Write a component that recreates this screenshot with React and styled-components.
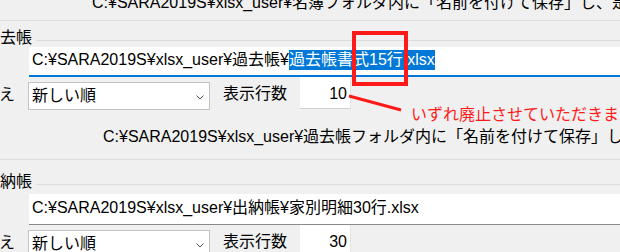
import React from 'react';
import styled, { createGlobalStyle } from 'styled-components';

const Global = createGlobalStyle`
  html, body { margin: 0; padding: 0; background: #f0f0f0; overflow: hidden; }
  body {
    font-family: "Liberation Sans", "Noto Sans CJK JP", sans-serif;
    font-size: 16px;
    color: #000;
  }
`;

const Viewport = styled.div`
  position: relative;
  width: 620px;
  height: 252px;
  overflow: hidden;
  background: #f0f0f0;
`;

const Canvas = styled.div`
  margin-left: -60px;
  margin-top: -8px;
  width: 800px;
`;

const TopNote = styled.div`
  border-bottom: 1px solid #dcdcdc;
  padding: 0 0 6px 152px;
  line-height: 22px;
  white-space: nowrap;
`;

const Group = styled.section`
  margin-top: ${p => p.$top}px;
  border-bottom: 1px solid #dcdcdc;
  padding-bottom: 11px;
`;

const Header = styled.div`
  display: flex;
  height: 18px;
`;

const Legend = styled.span`
  margin-left: 44px;
  padding-right: 4px;
  line-height: 18px;
  white-space: nowrap;
`;

const Rule = styled.span`
  flex: 1;
  height: 1px;
  margin-top: 11px;
  background: #dcdcdc;
`;

const PathBox = styled.div`
  margin: ${p => p.$gap}px 0 0 89px;
  width: 620px;
  height: ${p => (p.$focused ? 30 : 31)}px;
  box-sizing: border-box;
  background: #fff;
  border-bottom: ${p => (p.$focused ? '2px solid #0078d7' : '1px solid #8a8a8a')};
  padding: ${p => (p.$focused ? 3 : 4)}px 0 0 3px;
  line-height: 20px;
  white-space: nowrap;
  overflow: hidden;
`;

const Selected = styled.span`
  display: inline-block;
  height: 20px;
  line-height: 20px;
  background: #0078d7;
  color: #fff;
`;

const OptionsRow = styled.div`
  display: flex;
  align-items: center;
  height: 33px;
  padding-left: 11px;
`;

const RowLabel = styled.span`
  width: 64px;
  line-height: 22px;
  white-space: nowrap;
  margin-right: 13px;
  margin-left: ${p => p.$ml || 0}px;
  margin-top: ${p => p.$mt || 0}px;
`;

const Select = styled.div`
  align-self: flex-end;
  width: 182px;
  height: 28px;
  box-sizing: border-box;
  background: #fff;
  border: 1px solid #c4c4c4;
  display: flex;
  align-items: center;
  justify-content: space-between;
  padding: 0 5px 0 3px;
  line-height: 22px;
`;

const Chevron = styled.svg`
  width: 8px;
  height: 5px;
  margin-top: 2px;
`;

const NumberBox = styled.div`
  align-self: flex-start;
  width: 51px;
  height: 32px;
  box-sizing: border-box;
  background: #fff;
  border-bottom: 1px solid #d0d0d0;
  border-right: 1px solid #e4e4e4;
  text-align: right;
  padding: 6px 3px 0 0;
  line-height: 22px;
`;

const Description = styled.div`
  margin-top: 16px;
  padding-left: 163px;
  line-height: 22px;
  white-space: nowrap;
`;

const RedBox = styled.div`
  position: absolute;
  left: 352px;
  top: 31px;
  width: 56px;
  height: 55px;
  box-sizing: border-box;
  border: 4px solid #ff1a1a;
`;

const Callout = styled.svg`
  position: absolute;
  left: 0;
  top: 0;
  width: 620px;
  height: 252px;
  pointer-events: none;
`;

const CalloutText = styled.div`
  position: absolute;
  left: 411px;
  top: 104px;
  color: #ff1a1a;
  line-height: 22px;
  white-space: nowrap;
`;

function SortRow({ count }) {
  return (
    <OptionsRow>
      <RowLabel $mt={3}>並び替え</RowLabel>
      <Select>
        <span>新しい順</span>
        <Chevron viewBox="0 0 8 5">
          <polyline points="0.5,0.5 4,4 7.5,0.5" fill="none" stroke="#555" strokeWidth="1" />
        </Chevron>
      </Select>
      <RowLabel $ml={13}>表示行数</RowLabel>
      <NumberBox>{count}</NumberBox>
    </OptionsRow>
  );
}

export default function App() {
  return (
    <>
      <Global />
      <Viewport>
        <Canvas>
          <TopNote>C:¥SARA2019S¥xlsx_user¥名簿フォルダ内に「名前を付けて保存」し、是非ご利用ください</TopNote>
          <Group $top={8}>
            <Header>
              <Legend>過去帳</Legend>
              <Rule />
            </Header>
            <PathBox $gap={0} $focused>
              C:¥SARA2019S¥xlsx_user¥過去帳¥<Selected>過去帳書式15行.xlsx</Selected>
            </PathBox>
            <SortRow count="10" />
            <Description>C:¥SARA2019S¥xlsx_user¥過去帳フォルダ内に「名前を付けて保存」し、是非ご利用ください</Description>
          </Group>
          <Group $top={13}>
            <Header>
              <Legend>出納帳</Legend>
              <Rule />
            </Header>
            <PathBox $gap={3}>
              C:¥SARA2019S¥xlsx_user¥出納帳¥家別明細30行.xlsx
            </PathBox>
            <SortRow count="30" />
          </Group>
        </Canvas>
        <RedBox />
        <Callout viewBox="0 0 620 252">
          <line x1="349" y1="96" x2="401" y2="110" stroke="#ff1a1a" strokeWidth="3" />
        </Callout>
        <CalloutText>いずれ廃止させていただきます</CalloutText>
      </Viewport>
    </>
  );
}
